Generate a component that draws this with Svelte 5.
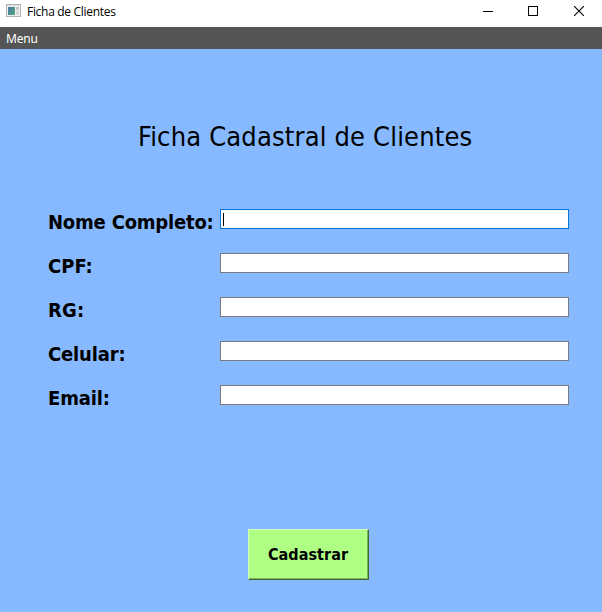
<script>
  const fields = [
    { id: 'nome', label: 'Nome Completo:', spacing: -0.2 },
    { id: 'cpf', label: 'CPF:', spacing: 0 },
    { id: 'rg', label: 'RG:', spacing: 0.2 },
    { id: 'celular', label: 'Celular:', spacing: -0.15 },
    { id: 'email', label: 'Email:', spacing: -0.15 }
  ];
</script>

<div class="window">
  <header class="titlebar">
    <svg class="appicon" width="16" height="14" viewBox="0 0 16 14" shape-rendering="crispEdges">
      <defs>
        <linearGradient id="pane" x1="0" y1="0" x2="1" y2="1">
          <stop offset="0" stop-color="#4778a8" />
          <stop offset="1" stop-color="#55a476" />
        </linearGradient>
      </defs>
      <rect x="0.5" y="0.5" width="14" height="12" fill="#f1f1f1" stroke="#b5b5b5" />
      <rect x="1" y="1" width="13" height="1" fill="#dadada" />
      <rect x="2" y="3" width="7" height="8" fill="url(#pane)" />
      <rect x="10" y="3" width="3" height="3" fill="#bfc8cf" />
      <rect x="10" y="7" width="3" height="4" fill="#d5d9dc" />
    </svg>
    <span class="caption">Ficha de Clientes</span>
    <div class="controls">
      <svg width="10" height="10" viewBox="0 0 10 10" shape-rendering="crispEdges"><path d="M0 5.5H10" stroke="#000" /></svg>
      <svg width="10" height="10" viewBox="0 0 10 10" shape-rendering="crispEdges"><rect x=".5" y=".5" width="9" height="9" fill="none" stroke="#000" /></svg>
      <svg width="10" height="10" viewBox="0 0 10 10"><path d="M0 0L10 10M10 0L0 10" stroke="#000" stroke-width="1.1" /></svg>
    </div>
  </header>
  <nav class="menubar"><span>Menu</span></nav>
  <main>
    <h1>Ficha Cadastral de Clientes</h1>
    <form>
      {#each fields as field, i}
        <div class="row">
          <label for={field.id} style="letter-spacing: {field.spacing}px">{field.label}</label>
          <div class="entry" class:focused={i === 0}>
            {#if i === 0}<i class="caret"></i>{/if}
            <input id={field.id} type="text" />
          </div>
        </div>
      {/each}
      <button type="button">Cadastrar</button>
    </form>
  </main>
</div>

<style>
  .window {
    width: 602px;
    height: 612px;
    display: flex;
    flex-direction: column;
    overflow: hidden;
    color: #000;
    font-family: Tahoma, 'DejaVu Sans Condensed', 'DejaVu Sans', sans-serif;
    font-stretch: condensed;
  }
  .titlebar {
    height: 27px;
    flex: none;
    display: flex;
    align-items: flex-start;
    background: #fff;
    box-sizing: border-box;
    padding: 4px 18px 0 6px;
  }
  .appicon { display: block; }
  .caption {
    margin-left: 5px;
    font: 12px/16px 'Open Sans', 'Noto Sans', sans-serif;
    letter-spacing: -0.3px;
    white-space: nowrap;
  }
  .controls {
    margin-left: auto;
    display: flex;
    gap: 36px;
    padding-top: 2px;
  }
  .controls svg { display: block; }
  .controls svg:first-child { margin-right: -1px; }
  .menubar {
    height: 22px;
    flex: none;
    background: #555;
    color: #fff;
    font: 12px/23px 'Noto Sans', sans-serif;
    letter-spacing: -0.2px;
    padding-left: 6px;
  }
  main {
    flex: 1;
    background: #86b9ff;
  }
  h1 {
    margin: 0;
    padding: 71px 0 0 138px;
    font-size: 27px;
    line-height: 34px;
    font-weight: 400;
    letter-spacing: 0.17px;
    white-space: nowrap;
  }
  form {
    padding: 55px 33px 0 48px;
    display: flex;
    flex-direction: column;
    gap: 24px;
  }
  .row {
    height: 20px;
    display: flex;
    justify-content: space-between;
  }
  label {
    width: 172px;
    flex: none;
    font-size: 20px;
    line-height: 27px;
    font-weight: 700;
    white-space: nowrap;
  }
  .entry {
    width: 349px;
    height: 20px;
    flex: none;
    display: flex;
    align-items: center;
    box-sizing: border-box;
    border: 1px solid #7a7a7a;
    background: #fff;
    padding-left: 2px;
  }
  .focused { border-color: #0078d7; }
  .caret {
    width: 1px;
    height: 13px;
    background: #000;
  }
  input {
    flex: 1;
    min-width: 0;
    height: 16px;
    padding: 0;
    border: 0;
    outline: 0;
    background: transparent;
  }
  button {
    width: 121px;
    height: 51px;
    margin: 100px 0 0 200px;
    padding: 1px 1px 0 0;
    border: 1px solid;
    border-color: #d7ffc4 #466635 #466635 #d7ffc4;
    box-shadow: inset -1px -1px #7ab35c;
    background: #afff84;
    color: #000;
    font: 700 16px/20px Tahoma, 'DejaVu Sans Condensed', 'DejaVu Sans', sans-serif;
    font-stretch: condensed;
    letter-spacing: 0.05px;
  }
</style>
